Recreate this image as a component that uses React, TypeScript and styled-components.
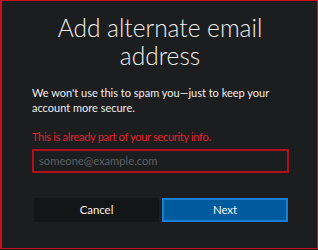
import React from "react";
import styled, { createGlobalStyle } from "styled-components";

const Global = createGlobalStyle`
  html, body { margin: 0; padding: 0; background: #1c1d1f; }
  * { box-sizing: border-box; }
`;

const Frame = styled.div`
  width: 318px;
  height: 249px;
  background: #1c1d1f;
  border: 1px solid #c8101e;
  border-left-width: 2px;
  padding: 13px 29px 0 30px;
  font-family: "Segoe UI", Lato, "Liberation Sans", sans-serif;
  color: #ffffff;
`;

const Title = styled.h1`
  margin: 0;
  font-family: "Segoe UI", Lato, sans-serif;
  font-weight: 300;
  font-size: 24.5px;
  line-height: 28px;
  text-align: center;
  color: #f0f0f0;
`;

const Text = styled.p<{ $error?: boolean }>`
  margin: 0;
  font-size: 11px;
  line-height: 14.5px;
  color: ${(p) => (p.$error ? "#e3202e" : "#f0f0f0")};
`;

const Intro = styled(Text)`
  margin-top: 16px;
`;

const ErrorText = styled(Text)`
  margin-top: 15px;
  letter-spacing: -0.3px;
`;

const Input = styled.input`
  display: block;
  margin-top: 4px;
  width: 257px;
  height: 24px;
  background: #1c1d1f;
  border: 2px solid #b0101c;
  padding: 0 5px;
  font-family: inherit;
  font-size: 11.2px;
  color: #fff;
  outline: none;
  &::placeholder { color: #5e6064; }
`;

const Buttons = styled.div`
  display: grid;
  grid-template-columns: 125px 126px;
  gap: 3px;
  margin-top: 25px;
  margin-left: 2px;
`;

const Button = styled.button<{ $primary?: boolean }>`
  height: 24px;
  font-family: inherit;
  font-size: 11.4px;
  color: #f2f2f2;
  background: ${(p) => (p.$primary ? "#005a9e" : "#141517")};
  border: 2px solid ${(p) => (p.$primary ? "#1a7fd4" : "#141517")};
  padding: 0;
`;

export default function App() {
  return (
    <>
      <Global />
      <Frame>
        <Title>Add alternate email address</Title>
        <Intro>We won't use this to spam you—just to keep your account more secure.</Intro>
        <ErrorText $error>This is already part of your security info.</ErrorText>
        <Input placeholder="someone@example.com" />
        <Buttons>
          <Button>Cancel</Button>
          <Button $primary>Next</Button>
        </Buttons>
      </Frame>
    </>
  );
}
